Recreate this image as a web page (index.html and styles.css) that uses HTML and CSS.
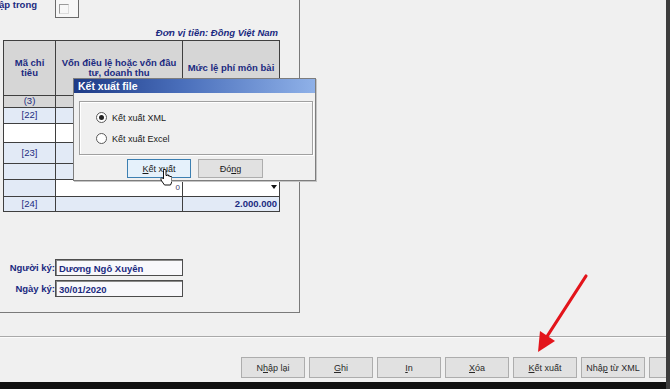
FILE: index.html
```html
<!DOCTYPE html>
<html lang="vi">
<head>
    <meta charset="UTF-8">
    <title>Kết xuất file</title>
    <link rel="stylesheet" href="styles.css">
</head>
<body>

<div class="screen">
    <div class="workspace">
        <div class="form-panel">
            <div class="top-row">
                <span class="lbl">ập trong</span>
                <span class="chk-box"><span class="chk"></span></span>
            </div>
            <div class="currency">Đơn vị tiền: Đồng Việt Nam</div>

            <table class="grid">
                <colgroup><col class="c1"><col class="c2"><col class="c3"></colgroup>
                <tr class="r-head">
                    <th>Mã chỉ<br>tiêu</th>
                    <th>Vốn điều lệ hoặc vốn đầu<br>tư, doanh thu</th>
                    <th>Mức lệ phí môn bài</th>
                </tr>
                <tr class="r-num"><td>(3)</td><td>(4)</td><td>(5)</td></tr>
                <tr class="r-a"><td class="code">[22]</td><td></td><td></td></tr>
                <tr class="r-b"><td class="blank"></td><td class="blank"></td><td></td></tr>
                <tr class="r-c"><td class="code">[23]</td><td></td><td></td></tr>
                <tr class="r-d"><td></td><td></td><td></td></tr>
                <tr class="r-e"><td></td><td class="blank num">0</td><td class="blank combo"><span class="drop"></span></td></tr>
                <tr class="r-f"><td class="code">[24]</td><td></td><td class="total">2.000.000</td></tr>
            </table>

            <div class="sign">
                <div class="sign-row"><span class="sign-lbl">Người ký:</span><span class="field">Dương Ngô Xuyên</span></div>
                <div class="sign-row"><span class="sign-lbl">Ngày ký:</span><span class="field">30/01/2020</span></div>
            </div>
        </div>
    </div>

    <div class="toolbar">
        <button class="tb-btn">N<u>h</u>ập lại</button>
        <button class="tb-btn"><u>G</u>hi</button>
        <button class="tb-btn"><u>I</u>n</button>
        <button class="tb-btn"><u>X</u>óa</button>
        <button class="tb-btn"><u>K</u>ết xuất</button>
        <button class="tb-btn">Nhậ<u>p</u> từ XML</button>
        <button class="tb-btn"></button>
    </div>
    <div class="taskbar"></div>

    <!-- modal dialog over the form -->
    <div class="dialog">
        <div class="dlg-title">Kết xuất file</div>
        <div class="dlg-body">
            <div class="group">
                <label class="opt"><span class="radio on"></span>Kết xuất XML</label>
                <label class="opt"><span class="radio"></span>Kết xuất Excel</label>
            </div>
            <div class="dlg-buttons">
                <button class="dlg-btn focus"><u>K</u>ết xuất</button>
                <button class="dlg-btn">Đó<u>n</u>g</button>
            </div>
        </div>
    </div>

    <svg class="cursor" width="13" height="17" viewBox="0 0 13 17">
        <path d="M4.5 0.5 h1.5 a1 1 0 0 1 1 1 v5 h1 v-0.5 h1.5 v1 h1.5 v0.5 h1 a1 1 0 0 1 1 1 v4 l-1.5 3.5 h-6 l-3.5 -5 v-1.5 a1 1 0 0 1 1.5 -0.5 l1 1 v-8.5 a1 1 0 0 1 0.5 -0.5 z" fill="#fff" stroke="#111" stroke-width="1"/>
    </svg>

    <svg class="arrow" width="670" height="389" viewBox="0 0 670 389">
        <line x1="586" y1="276" x2="546" y2="338" stroke="#e3141b" stroke-width="3.2" stroke-linecap="round"/>
        <polygon points="538,352 540,331 555,341" fill="#e3141b"/>
    </svg>
</div>

</body>
</html>
```

FILE: styles.css
```css
* { box-sizing: border-box; }
body {
    margin: 0;
    background: #f0f0f0;
    font-family: 'Liberation Sans', Arial, sans-serif;
    overflow: hidden;
}
.screen {
    position: relative;
    width: 670px;
    height: 389px;
    display: flex;
    flex-direction: column;
    border-right: 4px solid #3c3c3c;
    overflow: hidden;
}
.workspace {
    height: 336px;
    flex: none;
}
.form-panel {
    width: 300px;
    height: 313px;
    border-right: 1px solid #7a7a7a;
    border-bottom: 1px solid #7a7a7a;
    display: flex;
    flex-direction: column;
    padding-left: 3px;
    color: #1b2a80;
}
.top-row {
    height: 19px;
    display: flex;
    align-items: flex-start;
}
.lbl {
    font-weight: bold;
    font-size: 9.5px;
    margin-left: -4px;
    margin-top: -1px;
    width: 56px;
}
.chk-box {
    width: 24px;
    height: 20px;
    margin-top: -2px;
    border: 1px solid #6a6a6a;
    background: #f7f7f7;
    padding: 5px 0 0 3px;
}
.chk {
    display: block;
    width: 10px;
    height: 10px;
    border-top: 1px solid #9a9a9a;
    border-left: 1px solid #9a9a9a;
    border-right: 1px solid #dcdcdc;
    border-bottom: 1px solid #dcdcdc;
}
.currency {
    height: 21px;
    display: flex;
    align-items: flex-end;
    justify-content: flex-end;
    padding-right: 21px;
    padding-bottom: 1px;
    font-size: 9.5px;
    font-weight: bold;
    font-style: italic;
    line-height: 12px;
}

/* form table */
.grid {
    border-collapse: collapse;
    table-layout: fixed;
    width: 276px;
    font-size: 9.5px;
}
.c1 { width: 52px; }
.c2 { width: 127px; }
.c3 { width: 97px; }
.grid th, .grid td {
    border: 1px solid #3f3f3f;
    padding: 0 2px;
    text-align: center;
    line-height: 10.5px;
}
.grid th {
    height: 55px;
    background: #d6d6d6;
    font-weight: bold;
}
.grid td {
    background: #e2eaf6;
    font-weight: normal;
}
.r-num td { height: 12px; background: #d6d6d6; }
.r-a td { height: 16px; }
.r-b td { height: 19px; }
.r-c td { height: 21px; }
.r-d td { height: 16px; }
.r-e td { height: 17px; }
.r-f td { height: 15px; }
.grid td.blank { background: #fff; }
.grid td.num {
    text-align: right;
    font-size: 8px;
    color: #40406a;
}
.grid td.combo { position: relative; }
.drop {
    position: absolute;
    right: 2px;
    top: 5px;
    border-left: 3px solid transparent;
    border-right: 3px solid transparent;
    border-top: 4px solid #111;
}
.grid td.total {
    text-align: right;
    font-weight: bold;
}

/* signature */
.sign {
    margin-top: 47px;
    display: flex;
    flex-direction: column;
    gap: 4px;
}
.sign-row {
    display: flex;
    align-items: center;
}
.sign-lbl {
    width: 52px;
    text-align: right;
    font-size: 9.5px;
    font-weight: bold;
}
.field {
    width: 128px;
    height: 17px;
    border: 1px solid #4d4d4d;
    box-shadow: inset 1px 1px 0 #8a8a8a;
    background: #f8f8fb;
    font-size: 9.5px;
    font-weight: bold;
    padding: 3px 0 0 3px;
}

/* bottom toolbar */
.toolbar {
    height: 46px;
    flex: none;
    border-top: 1px solid #a9a9a9;
    box-shadow: inset 0 1px 0 #fbfbfb;
    display: flex;
    gap: 4px;
    padding: 20px 0 0 241px;
}
.tb-btn {
    flex: none;
    width: 64px;
    height: 21px;
    border: 1px solid #adadad;
    background: #e1e1e1;
    font-family: 'Liberation Sans', Arial, sans-serif;
    font-size: 9px;
    color: #2a2a2a;
    padding: 0;
}
.taskbar {
    flex: 1;
    background: #101010;
}

/* dialog */
.dialog {
    position: absolute;
    left: 73px;
    top: 78px;
    width: 243px;
    height: 103px;
    background: #f0f0f0;
    border: 1px solid #7d7d7d;
    box-shadow: 1px 1px 0 #c4c4c4;
}
.dlg-title {
    height: 14px;
    background: linear-gradient(to right, #1d3a86, #4a6fbb 45%, #8fb1e8);
    color: #fff;
    font-size: 10.5px;
    font-weight: bold;
    line-height: 14px;
    padding-left: 4px;
}
.dlg-body {
    padding: 8px 2px 0 5px;
}
.group {
    height: 54px;
    border: 1px solid #a0a0a0;
    box-shadow: inset 1px 1px 0 #fff, 1px 1px 0 #fff;
    display: flex;
    flex-direction: column;
    gap: 10px;
    padding: 10px 0 0 16px;
}
.opt {
    display: flex;
    align-items: center;
    gap: 5px;
    font-size: 9px;
    color: #1a1a1a;
    height: 11px;
}
.radio {
    width: 11px;
    height: 11px;
    border-radius: 50%;
    border: 1px solid #5a5a5a;
    background: #fff;
    position: relative;
}
.radio.on::after {
    content: "";
    position: absolute;
    left: 2px;
    top: 2px;
    width: 5px;
    height: 5px;
    border-radius: 50%;
    background: #222;
}
.dlg-buttons {
    display: flex;
    gap: 7px;
    margin-top: 4px;
    padding-left: 48px;
}
.dlg-btn {
    width: 65px;
    height: 19px;
    border: 1px solid #adadad;
    background: #e1e1e1;
    font-family: 'Liberation Sans', Arial, sans-serif;
    font-size: 9px;
    color: #1a1a1a;
    padding: 0;
}
.dlg-btn.focus {
    width: 64px;
    border-color: #3c7fb1;
    background: #e5f1fb;
}

.cursor {
    position: absolute;
    left: 159px;
    top: 169px;
}
.arrow {
    position: absolute;
    left: 0;
    top: 0;
    pointer-events: none;
}
```
